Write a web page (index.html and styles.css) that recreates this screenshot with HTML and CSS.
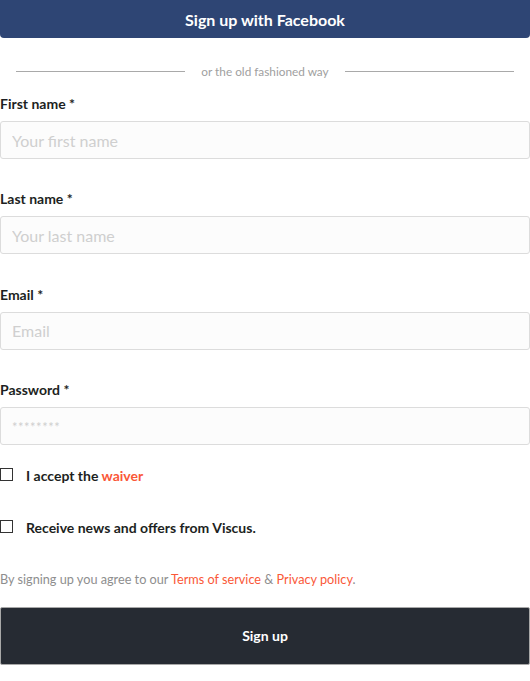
FILE: index.html
```html
<!DOCTYPE html>
<html>
<head>
<meta charset="utf-8">
<link rel="stylesheet" href="styles.css">
</head>
<body>
<form class="signup">
  <button type="button" class="fb-btn">Sign up with Facebook</button>
  <div class="divider"><span class="line"></span><span class="divider-text">or the old fashioned way</span><span class="line"></span></div>
  <div class="field">
    <label class="label">First name *</label>
    <input class="input" type="text" placeholder="Your first name">
  </div>
  <div class="field">
    <label class="label">Last name *</label>
    <input class="input" type="text" placeholder="Your last name">
  </div>
  <div class="field">
    <label class="label">Email *</label>
    <input class="input" type="text" placeholder="Email">
  </div>
  <div class="field">
    <label class="label">Password *</label>
    <input class="input input-pw" type="text" placeholder="********">
  </div>
  <label class="check first-check"><input type="checkbox" class="box"><span>I accept the <a class="link">waiver</a></span></label>
  <label class="check"><input type="checkbox" class="box"><span>Receive news and offers from Viscus.</span></label>
  <p class="terms">By signing up you agree to our <a class="link">Terms of service</a> &amp; <a class="link">Privacy policy</a>.</p>
  <button type="button" class="submit">Sign up</button>
</form>
</body>
</html>
```

FILE: styles.css
```css
html, body {
  margin: 0;
  padding: 0;
  background: #fff;
}
body {
  font-family: Lato, "Open Sans", sans-serif;
  color: #1d1f22;
  width: 530px;
}
.signup {
  display: flex;
  flex-direction: column;
}
.fb-btn {
  height: 38px;
  width: 530px;
  border: none;
  border-radius: 0 0 4px 4px;
  background: #2e4574;
  color: #fff;
  font-family: Lato, sans-serif;
  font-weight: 700;
  font-size: 16px;
  padding: 1px 0 0;
  margin: 0;
}
.divider {
  margin-top: 23px;
  height: 20px;
  display: flex;
  align-items: center;
  gap: 16px;
  padding: 0 16px;
}
.line {
  flex: 1;
  height: 1px;
  background: #a9a9a9;
}
.divider-text {
  font-size: 11.8px;
  color: #a0a0a0;
}
.field {
  display: flex;
  flex-direction: column;
  margin-top: 14px;
}
.field + .field {
  margin-top: 31.33px;
}
.label {
  font-size: 14px;
  font-weight: 700;
  line-height: 18px;
  margin-bottom: 8px;
  color: #1d1f22;
}
.input {
  box-sizing: border-box;
  height: 38px;
  width: 530px;
  margin: 0;
  border: 1px solid #dcdcdc;
  border-radius: 3px;
  background: #fcfcfc;
  padding: 0 11px;
  font-family: Lato, sans-serif;
  font-size: 16px;
  outline: none;
}
.input::placeholder {
  color: #cfcfcf;
}
.input-pw::placeholder {
  font-size: 13px;
  letter-spacing: 0.5px;
}
.check {
  display: flex;
  align-items: center;
  height: 20px;
  font-size: 14px;
  font-weight: 700;
  margin-top: 32px;
}
.first-check {
  margin-top: 21px;
}
.box {
  appearance: none;
  -webkit-appearance: none;
  width: 13px;
  height: 13px;
  margin: 0 13px 0 0;
  border: 1px solid #333;
  border-radius: 0;
  background: #fff;
  box-sizing: border-box;
  position: relative;
  top: -1px;
}
.link {
  color: #fa5838;
}
.terms {
  margin: 32px 0 0;
  font-size: 12.7px;
  line-height: 18px;
  color: #8e8e8e;
}
.submit {
  margin-top: 19px;
  height: 58px;
  width: 530px;
  box-sizing: border-box;
  border: 1px solid #a8a8a8;
  border-radius: 2px;
  background: #262b33;
  color: #fff;
  font-family: Lato, sans-serif;
  font-weight: 700;
  font-size: 14px;
  padding: 0;
}
```
